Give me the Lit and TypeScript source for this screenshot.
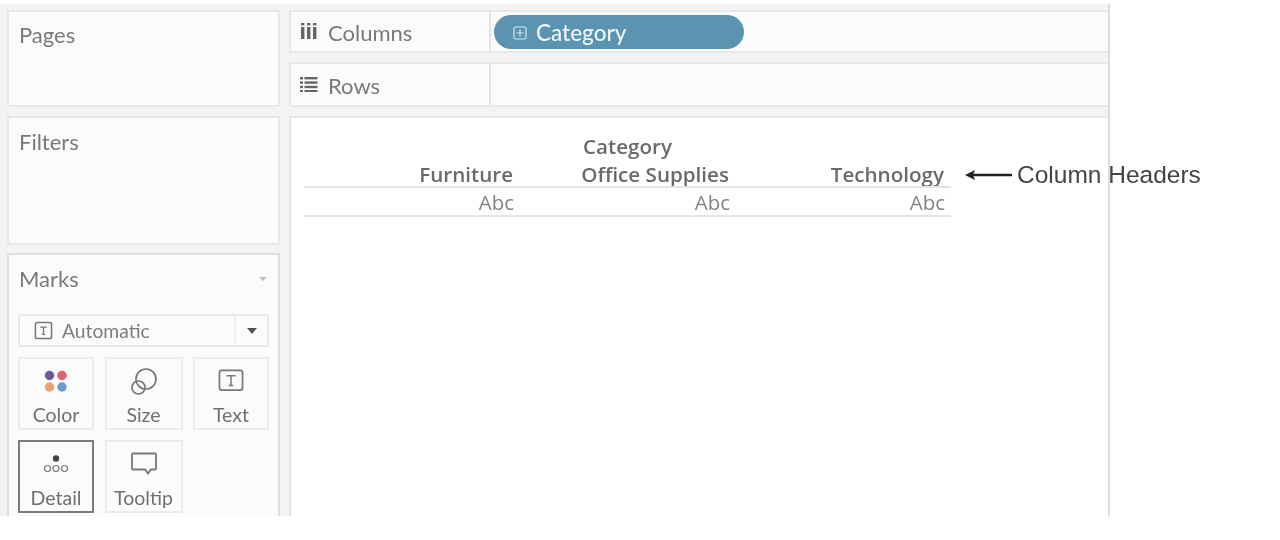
import { LitElement, html, css } from "lit";
import { customElement } from "lit/decorators.js";

const textIcon = (s: number) => html`<svg width=${s} height=${s} viewBox="0 0 20 20" fill="none"><rect x="1.5" y="1.5" width="17" height="17" rx="2" stroke="#777" stroke-width="1.6"/><path d="M6.5 6.5h7M10 6.5v7.5M8.5 14h3" stroke="#777" stroke-width="1.4"/></svg>`;

@customElement("app-root")
export class AppRoot extends LitElement {
  static styles = css`
    :host { display: block; width: 1280px; height: 540px; background: #fff; overflow: hidden; font-family: Lato, "Liberation Sans", sans-serif; color: #6f6f6f; position: relative; }
    .frame { filter: blur(0.7px); margin-top: 4px; width: 1110px; height: 512px; box-sizing: border-box; padding: 6px 2px 0 7px; background: #f3f3f3; display: grid; grid-template-columns: 273px 1fr; column-gap: 9px; overflow: hidden; border-right: 2px solid #dcdcdc; }
    .left, .right { display: flex; flex-direction: column; min-height: 0; }
    .panel { box-sizing: border-box; background: #fbfbfb; border: 2px solid #e8e8e8; }
    .title { font-size: 22px; line-height: 24px; color: #7a7a7a; }
    .pages { height: 97px; padding: 11px 10px; margin-bottom: 9px; }
    .filters { height: 129px; padding: 12px 10px; margin-bottom: 8px; }
    .marks { flex: 1; height: 280px; padding: 12px 9px 0; border-color: #dedede; border-bottom: 0; }
    .marks .title { margin-left: 1px; }
    .marks-head { display: flex; justify-content: space-between; align-items: center; height: 24px; margin-bottom: 23px; }
    .marks-caret { width: 0; height: 0; border: 4px solid transparent; border-top: 4px solid #bdbdbd; border-bottom: 0; margin-right: 2px; }
    .select { box-sizing: border-box; height: 33px; border: 2px solid #e8e8e8; border-radius: 3px; display: grid; grid-template-columns: 1fr 31px; align-items: center; background: #fbfbfb; margin-bottom: 10px; font-size: 19.3px; color: #7d7d7d; }
    .select-main { display: flex; align-items: center; gap: 9px; padding-left: 14px; border-right: 2px solid #eee; height: 100%; }
    .select-caret { justify-self: center; width: 0; height: 0; border: 5.5px solid transparent; border-top: 6px solid #555; border-bottom: 0; }
    .cards { display: grid; grid-template-columns: 76px 78px 76px; column-gap: 10.5px; row-gap: 10px; }
    .card { box-sizing: border-box; height: 73px; border: 2px solid #ececec; display: flex; flex-direction: column; align-items: center; padding-top: 8px; font-size: 19.5px; line-height: 22px; color: #6f6f6f; background: #fbfbfb; }
    .card svg { height: 30px; display: block; margin-bottom: 7px; }
    .card.sel { border: 2px solid #7c7c7c; }
    .shelf { height: 43px; display: grid; grid-template-columns: 200px 1fr; margin-bottom: 9px; margin-right: -2px; border-right: 0; }
    .shelf.rows { height: 45px; margin-bottom: 9px; }
    .shelf-label { display: flex; align-items: center; gap: 10px; padding: 2px 0 0 9px; border-right: 2px solid #e4e4e4; font-size: 22px; color: #7a7a7a; }
    .shelf-label svg { display: block; margin-top: -4px; }
    .pill-cell { display: flex; align-items: center; padding-left: 3px; }
    .pill { box-sizing: border-box; width: 250px; height: 34px; border-radius: 17px; background: #5a94b0; color: #eef4f7; display: flex; align-items: center; gap: 9px; padding: 2px 0 0 19px; font-size: 22.5px; font-weight: 500; }
    .canvas { flex: 1; background: #fff; border-top: 2px solid #e8e8e8; border-left: 2px solid #e4e4e4; padding: 12px 0 0 13px; margin-right: -2px; }
    .table { width: 647px; font-family: "Open Sans", "Noto Sans", sans-serif; color: #666; }
    .axis { font-size: 20.6px; font-weight: 600; line-height: 32px; text-align: center; color: #6a6a6a; height: 28px; width: 647px; }
    .grid { display: grid; grid-template-columns: 209px 216px 215px 7px; }
    .hdr { font-size: 20.6px; font-weight: 600; line-height: 32px; height: 28px; text-align: right; color: #6a6a6a; }
    .rule { grid-column: 1 / -1; height: 2px; background: #e4e4e4; }
    .val { font-size: 20.5px; line-height: 29px; height: 27px; text-align: right; color: #848484; position: relative; left: 1px; }
    .note { position: absolute; left: 965px; top: 161px; display: flex; align-items: center; gap: 5px; font-family: "Liberation Sans", Arial, sans-serif; font-size: 24.5px; line-height: 28px; color: #444; filter: blur(0.55px); }
    .note svg { display: block; }
  `;

  private card(label: string, icon: unknown, sel = false) {
    return html`<div class="card ${sel ? "sel" : ""}">${icon}<span>${label}</span></div>`;
  }

  render() {
    const color = html`<svg width="26" height="30" viewBox="0 0 26 30"><circle cx="6.5" cy="8.5" r="4.7" fill="#6b5a94"/><circle cx="19" cy="8.5" r="4.7" fill="#e0606f"/><circle cx="6.5" cy="20" r="4.7" fill="#eda36d"/><circle cx="19" cy="20" r="4.7" fill="#6a9ccc"/></svg>`;
    const size = html`<svg width="28" height="30" viewBox="0 0 28 30" fill="none" stroke="#777" stroke-width="1.7"><circle cx="16" cy="12" r="10"/><circle cx="8.5" cy="20.5" r="6.5"/></svg>`;
    const text = html`<svg width="28" height="30" viewBox="-1 -3 22 26" fill="none"><rect x="0" y="0" width="20" height="17" rx="2" stroke="#777" stroke-width="1.5"/><path d="M6 4.5h8M10 4.5v8.5M8 13h4" stroke="#777" stroke-width="1.3"/></svg>`;
    const detail = html`<svg width="30" height="30" viewBox="0 0 30 30" fill="none" stroke="#777" stroke-width="1.2"><circle cx="15" cy="8.5" r="3.2" fill="#444" stroke="none"/><circle cx="6.5" cy="18.5" r="3"/><circle cx="15" cy="18.5" r="3"/><circle cx="23.5" cy="18.5" r="3"/></svg>`;
    const tip = html`<svg width="28" height="30" viewBox="0 0 28 30" fill="none" stroke="#777" stroke-width="1.8"><path d="M3 3.5h22a1 1 0 0 1 1 1v14a1 1 0 0 1-1 1h-4l-3 4-3-4H3a1 1 0 0 1-1-1v-14a1 1 0 0 1 1-1z"/></svg>`;
    return html`
      <div class="frame">
        <div class="left">
          <section class="panel pages"><div class="title">Pages</div></section>
          <section class="panel filters"><div class="title">Filters</div></section>
          <section class="panel marks">
            <div class="marks-head"><div class="title">Marks</div><div class="marks-caret"></div></div>
            <div class="select">
              <div class="select-main">${textIcon(19)}<span>Automatic</span></div>
              <div class="select-caret"></div>
            </div>
            <div class="cards">
              ${this.card("Color", color)}
              ${this.card("Size", size)}
              ${this.card("Text", text)}
              ${this.card("Detail", detail, true)}
              ${this.card("Tooltip", tip)}
            </div>
          </section>
        </div>
        <div class="right">
          <div class="panel shelf">
            <div class="shelf-label">
              <svg width="18" height="16" viewBox="0 0 18 16" fill="#666"><rect x="1" y="0" width="3.4" height="2.4"/><rect x="1" y="4" width="3.4" height="12"/><rect x="7" y="0" width="3.4" height="2.4"/><rect x="7" y="4" width="3.4" height="12"/><rect x="13" y="0" width="3.4" height="2.4"/><rect x="13" y="4" width="3.4" height="12"/></svg>
              <span>Columns</span>
            </div>
            <div class="pill-cell"><div class="pill">
              <svg width="14" height="14" viewBox="0 0 14 14" fill="none" stroke="#dbe8ee" stroke-width="1.2"><rect x="1" y="1" width="12" height="12" rx="1.5"/><path d="M7 3.5v7M3.5 7h7"/></svg>
              <span>Category</span>
            </div></div>
          </div>
          <div class="panel shelf rows">
            <div class="shelf-label">
              <svg width="18" height="16" viewBox="0 0 18 16" fill="#666"><rect x="0" y="1" width="3" height="2.4"/><rect x="4.5" y="1" width="13" height="2.4"/><rect x="0" y="5.4" width="3" height="2.4"/><rect x="4.5" y="5.4" width="13" height="2.4"/><rect x="0" y="9.8" width="3" height="2.4"/><rect x="4.5" y="9.8" width="13" height="2.4"/><rect x="0" y="14" width="3" height="2"/><rect x="4.5" y="14" width="13" height="2"/></svg>
              <span>Rows</span>
            </div>
            <div></div>
          </div>
          <div class="canvas">
            <div class="table">
              <div class="axis">Category</div>
              <div class="grid">
                <div class="hdr">Furniture</div><div class="hdr">Office Supplies</div><div class="hdr">Technology</div><div></div>
                <div class="rule"></div>
                <div class="val">Abc</div><div class="val">Abc</div><div class="val">Abc</div><div></div>
                <div class="rule"></div>
              </div>
            </div>
          </div>
        </div>
      </div>
      <div class="note">
        <svg width="47" height="12" viewBox="0 0 47 12"><path d="M0 6l10-5-2 5 2 5z" fill="#222"/><path d="M6 6h41" stroke="#222" stroke-width="2.6"/></svg>
        <span>Column Headers</span>
      </div>
    `;
  }
}
